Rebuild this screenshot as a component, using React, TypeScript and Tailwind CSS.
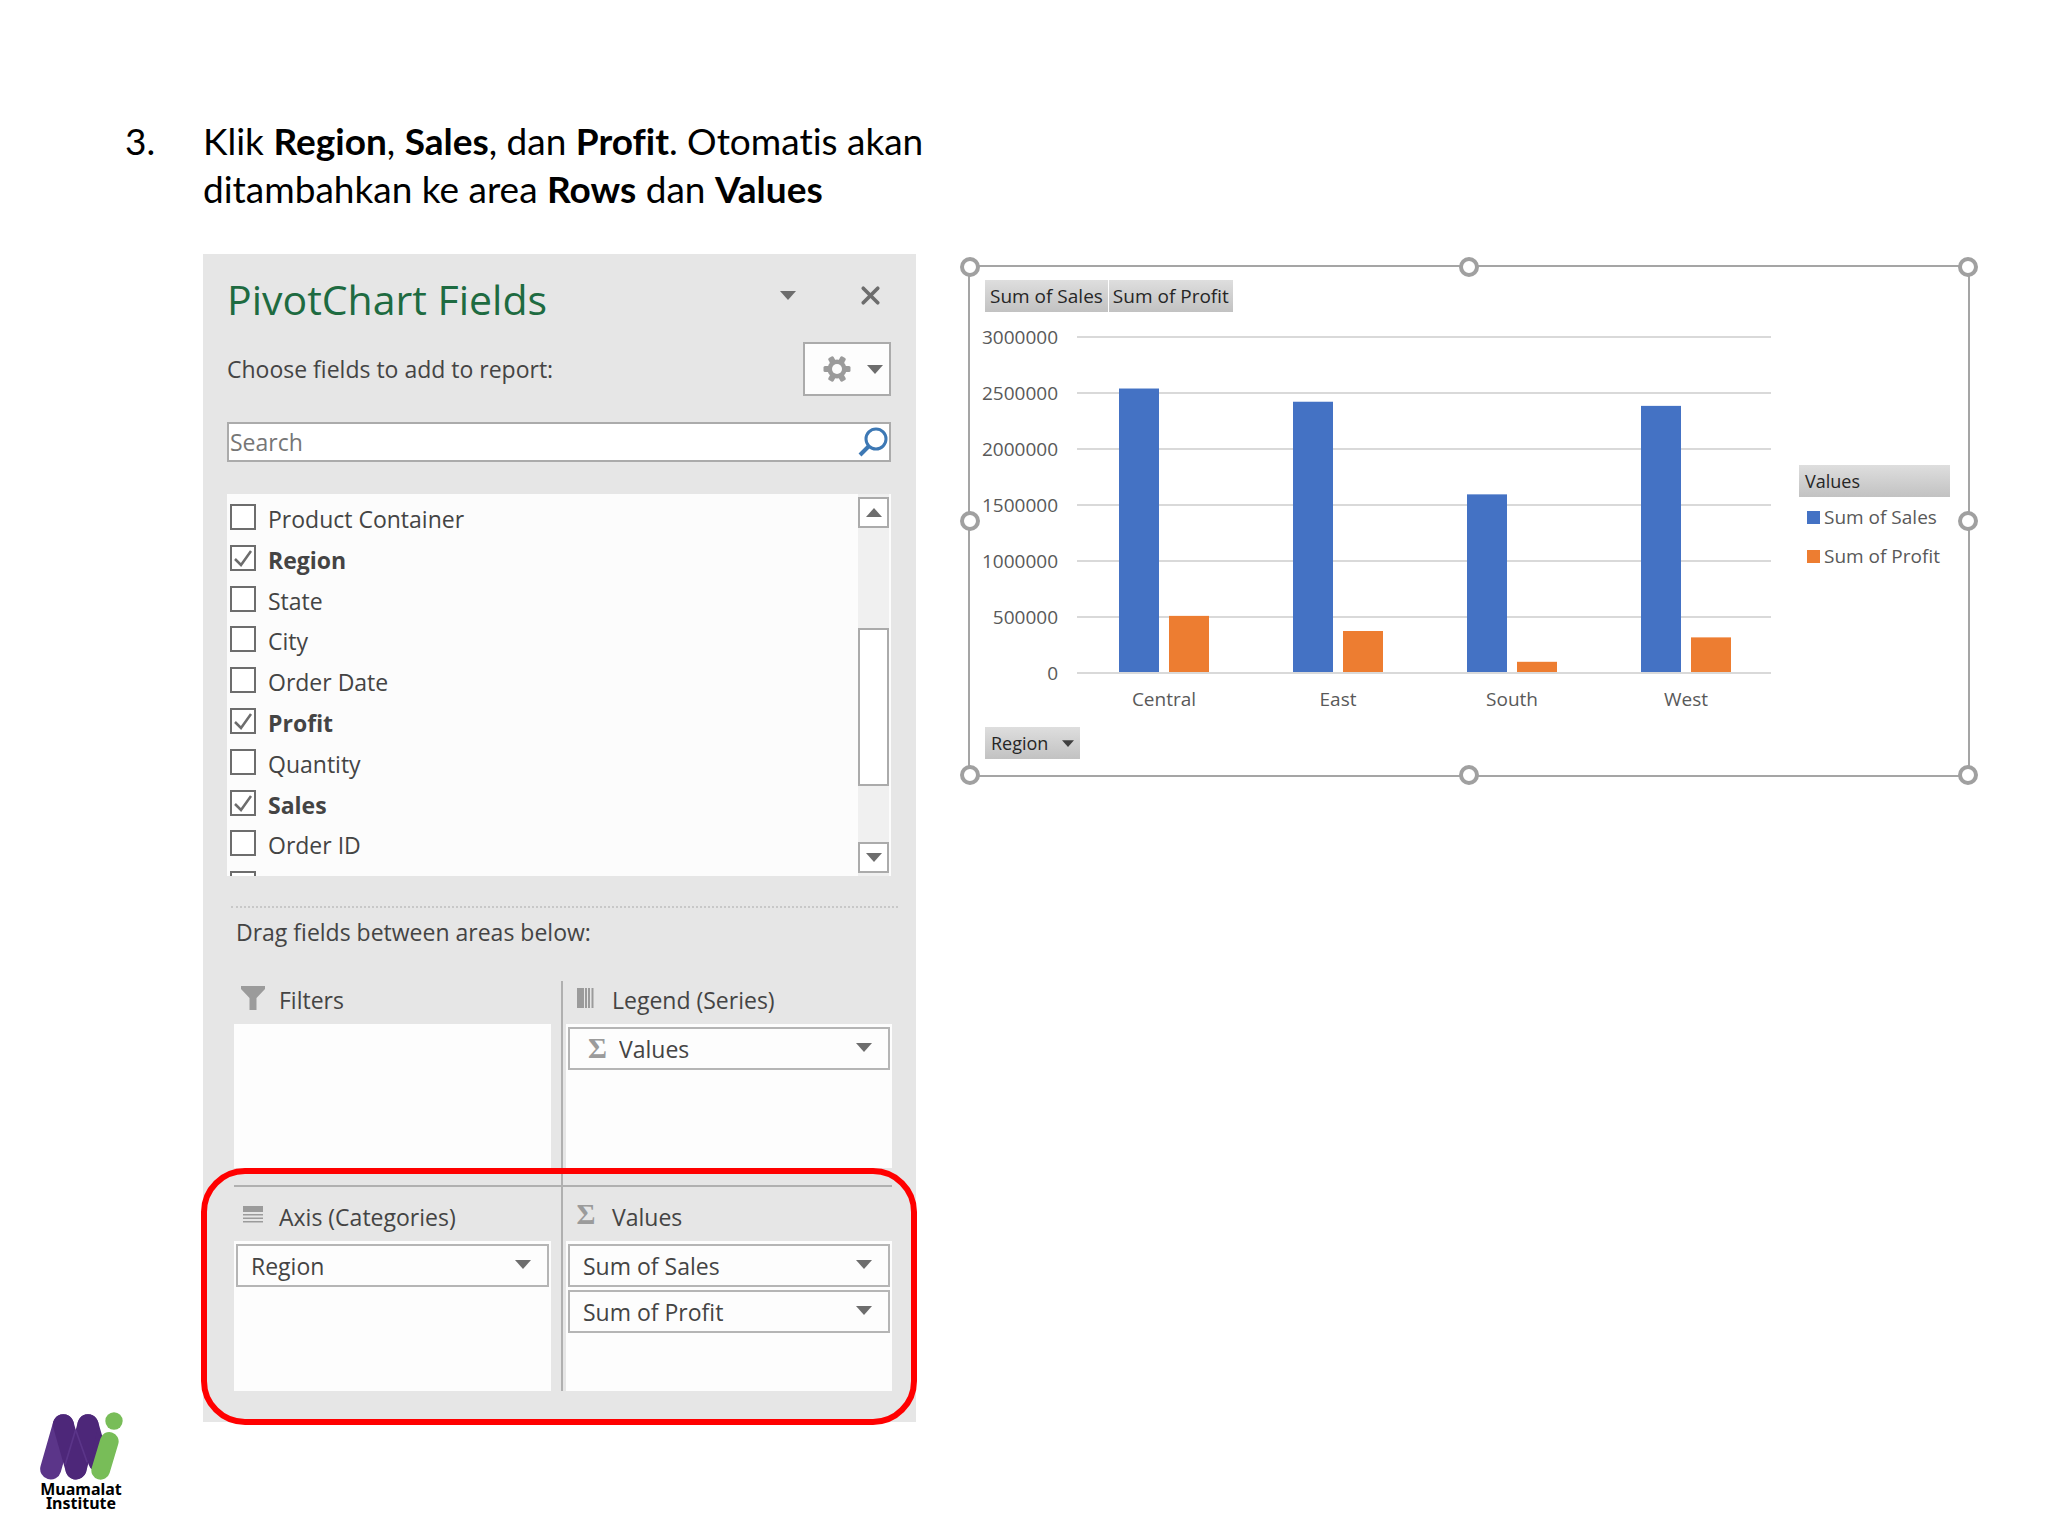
import React, { useState } from 'react';
import { X } from 'lucide-react';

const FIELDS = [
  'Product Container',
  'Region',
  'State',
  'City',
  'Order Date',
  'Profit',
  'Quantity',
  'Sales',
  'Order ID',
];

const SALES_DATA = [
  { region: 'Central', sales: 2540000, profit: 510000 },
  { region: 'East', sales: 2422000, profit: 375000 },
  { region: 'South', sales: 1595000, profit: 100000 },
  { region: 'West', sales: 2385000, profit: 318000 },
];

const TICKS = [3000000, 2500000, 2000000, 1500000, 1000000, 500000, 0];

const Caret = ({ up = false, className = 'text-[#6d6d6d]' }) => (
  <svg width="16" height="9" viewBox="0 0 16 9" fill="currentColor" className={className} aria-hidden="true">
    <path d={up ? 'M0 9 8 0l8 9z' : 'M0 0h16L8 9z'} />
  </svg>
);

const Gear = () => (
  <svg width="28" height="28" viewBox="0 0 28 28" aria-hidden="true">
    <g fill="#9b9b9b">
      {[30, 90, 150].map((deg) => (
        <rect key={deg} x="11" y="0.5" width="6" height="27" rx="1.5" transform={`rotate(${deg} 14 14)`} />
      ))}
      <circle cx="14" cy="14" r="9.5" />
    </g>
    <circle cx="14" cy="14" r="5" fill="#fdfdfd" />
  </svg>
);

const Magnifier = () => (
  <svg width="30" height="30" viewBox="0 0 30 30" fill="none" stroke="#3d78b4" aria-hidden="true">
    <circle cx="18" cy="12" r="10" strokeWidth="3" />
    <path d="M11 19 2 28" strokeWidth="4" />
  </svg>
);

const FunnelIcon = () => (
  <svg width="24" height="24" viewBox="0 0 24 24" fill="#9b9b9b" aria-hidden="true">
    <path d="M0 0h24v3l-8.500 9v12h-7V12L0 3z" />
  </svg>
);

const ColumnsIcon = () => (
  <svg width="18" height="20" viewBox="0 0 18 20" fill="#9b9b9b" aria-hidden="true">
    <path d="M0 0h7v20H0zM8 0h2v20H8zM11 0h2v20h-2zM14.500 0h2v20h-2z" />
  </svg>
);

const RowsIcon = () => (
  <svg width="20" height="17" viewBox="0 0 20 17" fill="#9b9b9b" aria-hidden="true">
    <path d="M0 0h20v6H0zM0 8h20v1.500H0zM0 11.500h20V13H0zM0 15h20v1.500H0z" />
  </svg>
);

const SigmaIcon = () => (
  <span className="font-['Liberation_Serif',serif] text-[29px] leading-6 font-bold text-[#9b9b9b]">Σ</span>
);

const FieldRow = ({ name, defaultChecked = false }: { name?: string; defaultChecked?: boolean }) => {
  const [checked, setChecked] = useState(defaultChecked);

  return (
    <li>
      <label className={`flex gap-3 ${checked ? 'font-bold' : ''}`}>
        <span className="grid size-[26px] shrink-0">
          <input
            type="checkbox"
            checked={checked}
            onChange={() => setChecked(!checked)}
            className="col-start-1 row-start-1 appearance-none border-2 border-[#6d6d6d] bg-white"
          />
          {checked && (
            <svg
              viewBox="0 0 26 26"
              fill="none"
              stroke="#6d6d6d"
              strokeWidth="2.5"
              className="pointer-events-none col-start-1 row-start-1"
              aria-hidden="true"
            >
              <path d="M5 14l6 6L21 6" />
            </svg>
          )}
        </span>
        {name && <span className="pt-px leading-7">{name}</span>}
      </label>
    </li>
  );
};

const AreaSelect = ({ value, sigma = false }: { value: string; sigma?: boolean }) => (
  <div className="grid h-[43px] items-center border-2 border-[#b5b5b5] bg-[#fdfdfd]">
    <select
      aria-label={value}
      className={`col-start-1 row-start-1 h-full w-full appearance-none bg-transparent pt-px ${sigma ? 'pl-[49px]' : 'pl-[13px]'}`}
    >
      <option>{value}</option>
    </select>
    {sigma && (
      <span className="pointer-events-none col-start-1 row-start-1 flex pb-0.5 pl-[18px]">
        <SigmaIcon />
      </span>
    )}
    <span className="pointer-events-none col-start-1 row-start-1 justify-self-end pr-4 pb-0.5">
      <Caret />
    </span>
  </div>
);

const AreaHeader = ({ icon, title }: { icon: React.ReactNode; title: string }) => (
  <h3 className="flex items-center gap-3.5">
    <span className="flex w-6 shrink-0 justify-center pb-1.5">{icon}</span>
    {title}
  </h3>
);

const PivotFields = () => (
  <section className="w-[713px] shrink-0 bg-[#e6e6e6] pt-5 font-['Open_Sans',sans-serif] text-[23px] text-[#444444]">
    <div className="pr-[25px] pl-6">
      <div className="flex items-center justify-between">
        <h2 className="text-[41px] leading-[50px] text-[#1e6b41]">PivotChart Fields</h2>
        <div className="flex items-center gap-[60px] pr-1.5 pb-2">
          <button aria-label="Pane options">
            <Caret />
          </button>
          <button aria-label="Close">
            <X size={29} strokeWidth={3} className="text-[#6d6d6d]" />
          </button>
        </div>
      </div>

      <div className="mt-[18px] flex items-center justify-between">
        <p>Choose fields to add to report:</p>
        <button
          aria-label="Tools"
          className="flex h-[54px] w-[88px] items-center justify-end gap-4 border-2 border-[#ababab] bg-[#fdfdfd] pr-1.5"
        >
          <Gear />
          <Caret />
        </button>
      </div>

      <div className="mt-[26px] flex h-10 items-center border-2 border-[#ababab] bg-white pr-px">
        <input
          type="text"
          placeholder="Search"
          aria-label="Search"
          className="min-w-0 flex-1 pl-px outline-none placeholder:text-[#767676]"
        />
        <Magnifier />
      </div>

      <div className="mt-8 flex h-[382px] overflow-hidden bg-[#fcfcfc]">
        <ul className="grid h-[418px] flex-1 grid-rows-10 pt-2.5 pl-[3px]">
          {FIELDS.map((name) => (
            <FieldRow key={name} name={name} defaultChecked={['Region', 'Profit', 'Sales'].includes(name)} />
          ))}
          <FieldRow />
        </ul>
        <div className="mr-0.5 flex w-[31px] flex-col bg-[#f0f0f0] pt-[3px] pb-[3px]">
          <button aria-label="Scroll up" className="grid h-[31px] place-items-center border-2 border-[#ababab] bg-white">
            <Caret up />
          </button>
          <div className="mt-[100px] h-[158px] border-2 border-[#ababab] bg-white" />
          <button
            aria-label="Scroll down"
            className="mt-auto grid h-[31px] place-items-center border-2 border-[#ababab] bg-white"
          >
            <Caret />
          </button>
        </div>
      </div>
    </div>

    <div className="mt-[30px] mr-[18px] ml-7 border-t-2 border-dotted border-[#c8c8c8]" />
    <p className="mt-2 pl-[33px] leading-8">Drag fields between areas below:</p>

    {/* Drop areas */}
    <div className="mt-[33px] pr-6 pl-[31px]">
      <div className="flex">
        <div className="w-[327px] pr-2.5 pb-[17px]">
          <div className="flex h-[43px] items-center pb-1 pl-[7px]">
            <AreaHeader icon={<FunnelIcon />} title="Filters" />
          </div>
          <div className="h-36 bg-[#fdfdfd]" />
        </div>
        <div className="flex-1 border-l-2 border-[#b0b0b0] pb-[17px] pl-[3px]">
          <div className="flex h-[43px] items-center pb-1 pl-2">
            <AreaHeader icon={<ColumnsIcon />} title="Legend (Series)" />
          </div>
          <div className="h-36 bg-[#fdfdfd] px-0.5 pt-[3px]">
            <AreaSelect value="Values" sigma />
          </div>
        </div>
      </div>

      <div className="relative pb-[31px]">
        <div className="flex border-t-2 border-[#b0b0b0]">
          <div className="w-[327px] pr-2.5">
            <div className="flex h-[54px] items-center pt-1.5 pl-[7px]">
              <AreaHeader icon={<RowsIcon />} title="Axis (Categories)" />
            </div>
            <div className="h-[150px] bg-[#fdfdfd] px-0.5 pt-[3px]">
              <AreaSelect value="Region" />
            </div>
          </div>
          <div className="flex-1 border-l-2 border-[#b0b0b0] pl-[3px]">
            <div className="flex h-[54px] items-center pt-1.5 pl-2">
              <AreaHeader icon={<SigmaIcon />} title="Values" />
            </div>
            <div className="flex h-[150px] flex-col gap-[3px] bg-[#fdfdfd] px-0.5 pt-[3px]">
              <AreaSelect value="Sum of Sales" />
              <AreaSelect value="Sum of Profit" />
            </div>
          </div>
        </div>
        {/* Highlight around the axis and values areas */}
        <div className="pointer-events-none absolute -top-[17px] -right-[25px] -bottom-[3px] -left-[33px] rounded-[44px] border-[6px] border-[#ff0000]" />
      </div>
    </div>
  </section>
);

const Handle = ({ className }: { className: string }) => (
  <span className={`absolute size-5 rounded-full border-4 border-[#a0a0a0] bg-white ${className}`} />
);

const Plot = () => {
  const y = (value: number) => 345 - (value / 3000000) * 336;

  return (
    <svg
      viewBox="-10 -1 810 400"
      className="w-[810px] min-w-0 shrink"
      fontSize="19"
      fill="#595959"
      role="img"
      aria-label="Sales and profit by region"
    >
      {TICKS.map((tick) => (
        <g key={tick}>
          <line x1="93" x2="787" y1={y(tick)} y2={y(tick)} stroke="#d9d9d9" strokeWidth="2" />
          <text x="74" y={y(tick) + 7} textAnchor="end">
            {tick}
          </text>
        </g>
      ))}
      {SALES_DATA.map(({ region, sales, profit }, i) => {
        const x = 135 + i * 174;
        return (
          <g key={region}>
            <rect x={x} y={y(sales)} width="40" height={344 - y(sales)} fill="#4472c4" />
            <rect x={x + 50} y={y(profit)} width="40" height={344 - y(profit)} fill="#ed7d31" />
            <text x={x + 45} y="378" textAnchor="middle">
              {region}
            </text>
          </g>
        );
      })}
    </svg>
  );
};

const PivotChart = () => (
  <section className="relative mt-[11px] h-[512px] min-w-0 flex-1 border-2 border-[#a5a5a5] bg-white pt-[13px] pl-[15px] font-['Open_Sans',sans-serif] text-[18px] text-[#262626]">
    <div className="flex gap-px text-[19px]">
      <button className="h-8 bg-linear-to-b from-[#dedede] to-[#c2c2c2] px-[5px]">Sum of Sales</button>
      <button className="h-8 bg-linear-to-b from-[#dedede] to-[#c2c2c2] px-1">Sum of Profit</button>
    </div>

    <div className="-ml-[11px] flex items-start pt-[15px]">
      <Plot />
      <div className="mt-[138px] ml-[15px] w-[151px] shrink-0">
        <div className="h-8 bg-linear-to-b from-[#dedede] to-[#c2c2c2] px-1.5 leading-8">Values</div>
        <ul className="flex flex-col gap-[11px] pt-1.5 pl-2 text-[19px] leading-7 text-[#595959]">
          <li className="flex items-center gap-1">
            <span className="size-[13px] bg-[#4472c4]" />
            Sum of Sales
          </li>
          <li className="flex items-center gap-1">
            <span className="size-[13px] bg-[#ed7d31]" />
            Sum of Profit
          </li>
        </ul>
      </div>
    </div>

    <button className="flex h-8 items-center gap-3.5 bg-linear-to-b from-[#dedede] to-[#c2c2c2] px-1.5">
      Region
      <Caret className="w-3 text-[#404040]" />
    </button>

    <Handle className="-top-2.5 -left-2.5" />
    <Handle className="-top-2.5 left-1/2 -translate-x-1/2" />
    <Handle className="-top-2.5 -right-2.5" />
    <Handle className="top-1/2 -left-2.5 -translate-y-1/2" />
    <Handle className="top-1/2 -right-2.5 -translate-y-1/2" />
    <Handle className="-bottom-2.5 -left-2.5" />
    <Handle className="-bottom-2.5 left-1/2 -translate-x-1/2" />
    <Handle className="-right-2.5 -bottom-2.5" />
  </section>
);

const Logo = () => (
  <div className="w-[84px] text-center font-['Noto_Sans',sans-serif] text-[16px] leading-[14px] font-bold text-black">
    <svg viewBox="57 66 252 206" className="w-full" fill="none" strokeLinecap="round" aria-hidden="true">
      <g strokeWidth="63">
        <path d="M204 104 236 215" stroke="#4d2779" />
        <path d="M92 237 130 104" stroke="#5b3589" />
        <path d="M130 104 168 237" stroke="#4d2779" />
        <path d="M168 237 204 104" stroke="#4d2779" />
      </g>
      <g stroke="#5b3589" strokeWidth="5">
        <path d="M136 222 166 122" />
        <path d="M168 122 201 215" />
      </g>
      <path d="M242 241 268 154" stroke="#78bd58" strokeWidth="56" />
      <circle cx="282" cy="93" r="26" fill="#78bd58" />
    </svg>
    <p className="pt-px">Muamalat Institute</p>
  </div>
);

const App = () => (
  <div className="flex min-h-screen bg-white text-black">
    <aside className="flex w-[203px] shrink-0 flex-col justify-between pt-[117px] pb-[26px]">
      <span className="pl-[125px] font-['Lato',sans-serif] text-[37px] leading-[48px]">3.</span>
      <div className="pl-[39px]">
        <Logo />
      </div>
    </aside>

    <main className="min-w-0 flex-1 pt-[117px] pr-[78px]">
      <p className="font-['Lato',sans-serif] text-[37px] leading-[48px] [font-variant-ligatures:none]">
        Klik <b>Region</b>, <b>Sales</b>, dan <b>Profit</b>. Otomatis akan
        <br />
        ditambahkan ke area <b>Rows</b> dan <b>Values</b>
      </p>
      <div className="mt-[41px] flex items-start gap-[52px]">
        <PivotFields />
        <PivotChart />
      </div>
    </main>
  </div>
);

export default App;
